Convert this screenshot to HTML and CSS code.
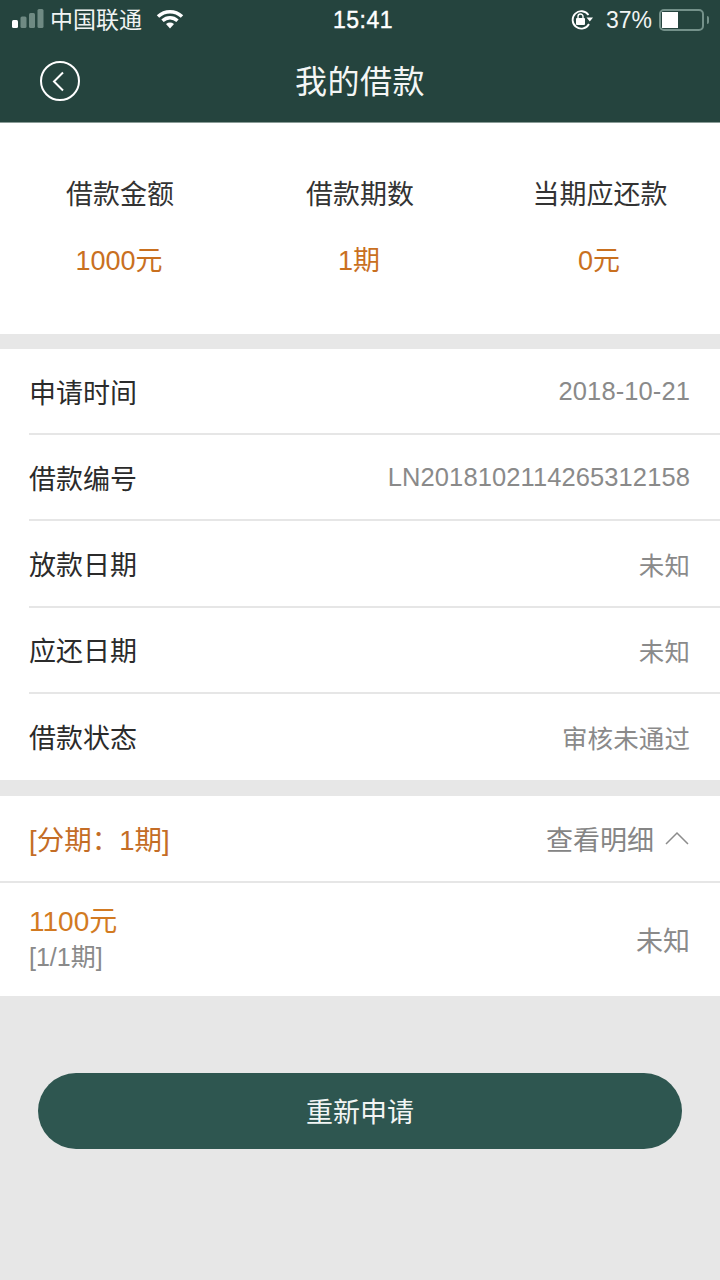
FILE: index.html
```html
<!DOCTYPE html>
<html lang="zh">
<head>
<meta charset="utf-8">
<title>我的借款</title>
<link rel="stylesheet" href="styles.css">
</head>
<body>
<header class="header">
  <div class="status">
    <div class="status-left">
      <svg class="signal" width="34" height="20" viewBox="0 0 34 20"><rect x="0" y="11" width="6" height="8" rx="1.5" fill="#fff"/><rect x="8.500" y="7.500" width="6" height="11.500" rx="1.500" fill="#6f8a83"/><rect x="17" y="4" width="6" height="15" rx="1.500" fill="#6f8a83"/><rect x="25.500" y="0" width="6" height="19" rx="1.500" fill="#6f8a83"/></svg>
      <span class="carrier">中国联通</span>
      <svg class="wifi" width="28" height="20" viewBox="0 0 28 20"><path d="M2 7.500C9 1 19 1 26 7.500" fill="none" stroke="#fff" stroke-width="3.500"/><path d="M6.500 11.800C11 7.800 17 7.800 21.500 11.800" fill="none" stroke="#fff" stroke-width="3.500"/><path d="M10 15Q14 12.200 18 15L14 19.500Z" fill="#fff"/></svg>
    </div>
    <div class="time">15:41</div>
    <div class="status-right">
      <svg class="lock" width="24" height="22" viewBox="0 0 24 22"><path d="M18.500 6A8.700 8.700 0 1 0 19 15" fill="none" stroke="#fff" stroke-width="1.800"/><path d="M16.500 8.500H23L19.800 12.500Z" fill="#fff"/><rect x="6" y="9" width="9" height="7" rx="1" fill="#fff"/><path d="M8 9.500V7.500a2.500 2.500 0 0 1 5 0V9.500" fill="none" stroke="#fff" stroke-width="1.400"/></svg>
      <span class="percent">37%</span>
      <div class="battery"><div class="battery-fill"></div></div>
      <div class="battery-cap"></div>
    </div>
  </div>
  <div class="nav">
    <svg class="back" width="42" height="42" viewBox="0 0 42 42"><circle cx="21" cy="21" r="19" fill="none" stroke="#fff" stroke-width="2"/><path d="M24 12.500L15 21.500L24 30.500" fill="none" stroke="#fff" stroke-width="2"/></svg>
    <h1 class="title">我的借款</h1>
  </div>
</header>

<section class="summary">
  <div class="summary-col"><div class="summary-label">借款金额</div><div class="summary-value">1000元</div></div>
  <div class="summary-col"><div class="summary-label">借款期数</div><div class="summary-value">1期</div></div>
  <div class="summary-col"><div class="summary-label">当期应还款</div><div class="summary-value">0元</div></div>
</section>

<section class="list">
  <div class="row"><span class="row-label">申请时间</span><span class="row-value">2018-10-21</span></div>
  <div class="row"><span class="row-label">借款编号</span><span class="row-value">LN2018102114265312158</span></div>
  <div class="row"><span class="row-label">放款日期</span><span class="row-value">未知</span></div>
  <div class="row"><span class="row-label">应还日期</span><span class="row-value">未知</span></div>
  <div class="row"><span class="row-label">借款状态</span><span class="row-value">审核未通过</span></div>
</section>

<section class="plan">
  <div class="plan-head">
    <span class="plan-title">[分期：1期]</span>
    <span class="plan-toggle">查看明细
      <svg class="chevron" width="26" height="16" viewBox="0 0 26 16"><path d="M2 14L13 3L24 14" fill="none" stroke="#8c8c8c" stroke-width="1.500"/></svg>
    </span>
  </div>
  <div class="plan-item">
    <div>
      <div class="plan-amount">1100元</div>
      <div class="plan-period">[1/1期]</div>
    </div>
    <span class="plan-status">未知</span>
  </div>
</section>

<div class="action"><button class="reapply" type="button">重新申请</button></div>
</body>
</html>
```

FILE: styles.css
```css
* { box-sizing: border-box; }
html, body { margin: 0; padding: 0; }
body {
  width: 720px;
  height: 1280px;
  overflow: hidden;
  background: #e7e7e7;
  font-family: "Liberation Sans", "Noto Sans CJK SC", sans-serif;
  color: #2b2b2b;
}
.header {
  height: 123px;
  background: #25443e;
  color: #fff;
  border-bottom: 1px solid #8a9c97;
}
.status {
  height: 40px;
  display: grid;
  grid-template-columns: 1fr auto 1fr;
  align-items: center;
  padding: 0 11px 0 12px;
}
.status-left { display: flex; align-items: center; }
.signal { margin-top: -2px; }
.carrier { font-size: 23px; margin-left: 4px; line-height: 40px; color: #f1f4f3; }
.wifi { margin-left: 14px; margin-top: -3px; }
.time { font-size: 23px; font-weight: 500; letter-spacing: 0.500px; margin-left: 5px; -webkit-text-stroke: 0.400px #fff; }
.status-right { display: flex; align-items: center; justify-content: flex-end; }
.percent { font-size: 23px; margin-left: 12px; margin-right: 7px; color: #f1f4f3; }
.battery {
  width: 45px;
  height: 22px;
  border: 2px solid #74918a;
  border-radius: 5px;
  padding: 1px;
}
.battery-fill { width: 16px; height: 16px; background: #fff; }
.battery-cap { width: 2px; height: 8px; margin-left: 3px; background: #74918a; border-radius: 0 2px 2px 0; }
.nav {
  height: 82px;
  padding-bottom: 4px;
  display: flex;
  align-items: center;
  justify-content: center;
  position: relative;
}
.back { position: absolute; left: 39px; top: 20px; }
.title { margin: 0; font-size: 32px; letter-spacing: 0.500px; font-weight: 400; color: #f4f6f5; }

.summary {
  height: 211px;
  background: #fff;
  display: grid;
  grid-template-columns: repeat(3, 1fr);
  margin-bottom: 15px;
  padding-top: 48px;
}
.summary-col { text-align: center; }
.summary-label { font-size: 27px; line-height: 48px; color: #333; }
.summary-value { font-size: 27px; line-height: 40px; margin-top: 22px; padding-right: 2px; color: #c9701f; }

.list { background: #fff; margin-bottom: 16px; }
.row {
  height: 86.200px;
  margin-left: 29px;
  padding-right: 30px;
  display: flex;
  align-items: center;
  justify-content: space-between;
  border-bottom: 2px solid #e6e6e6;
}
.row:last-child { border-bottom: 0; }
.row-label { font-size: 27px; color: #2b2b2b; }
.row-value { font-size: 25.500px; letter-spacing: 0.100px; color: #8a8a8a; }

.plan { background: #fff; height: 200px; }
.plan-head {
  height: 87px;
  padding: 0 30px 0 29px;
  display: flex;
  align-items: center;
  justify-content: space-between;
  border-bottom: 2px solid #e6e6e6;
}
.plan-title { font-size: 27.500px; color: #c46d26; }
.plan-toggle { display: flex; align-items: center; gap: 10px; font-size: 27px; color: #858585; }
.plan-item {
  height: 113px;
  padding: 0 30px 0 29px;
  display: flex;
  align-items: center;
  justify-content: space-between;
}
.plan-amount { font-size: 28px; line-height: 36px; color: #d27a22; }
.plan-period { font-size: 25px; line-height: 34px; color: #8a8a8a; }
.plan-status { font-size: 27px; color: #8a8a8a; }

.action { padding: 77px 38px 0; }
.reapply {
  display: block;
  width: 100%;
  height: 76px;
  border: 0;
  border-radius: 38px;
  background: #2e5650;
  color: #f2f5f4;
  font-family: inherit;
  font-size: 27px;
}
```
